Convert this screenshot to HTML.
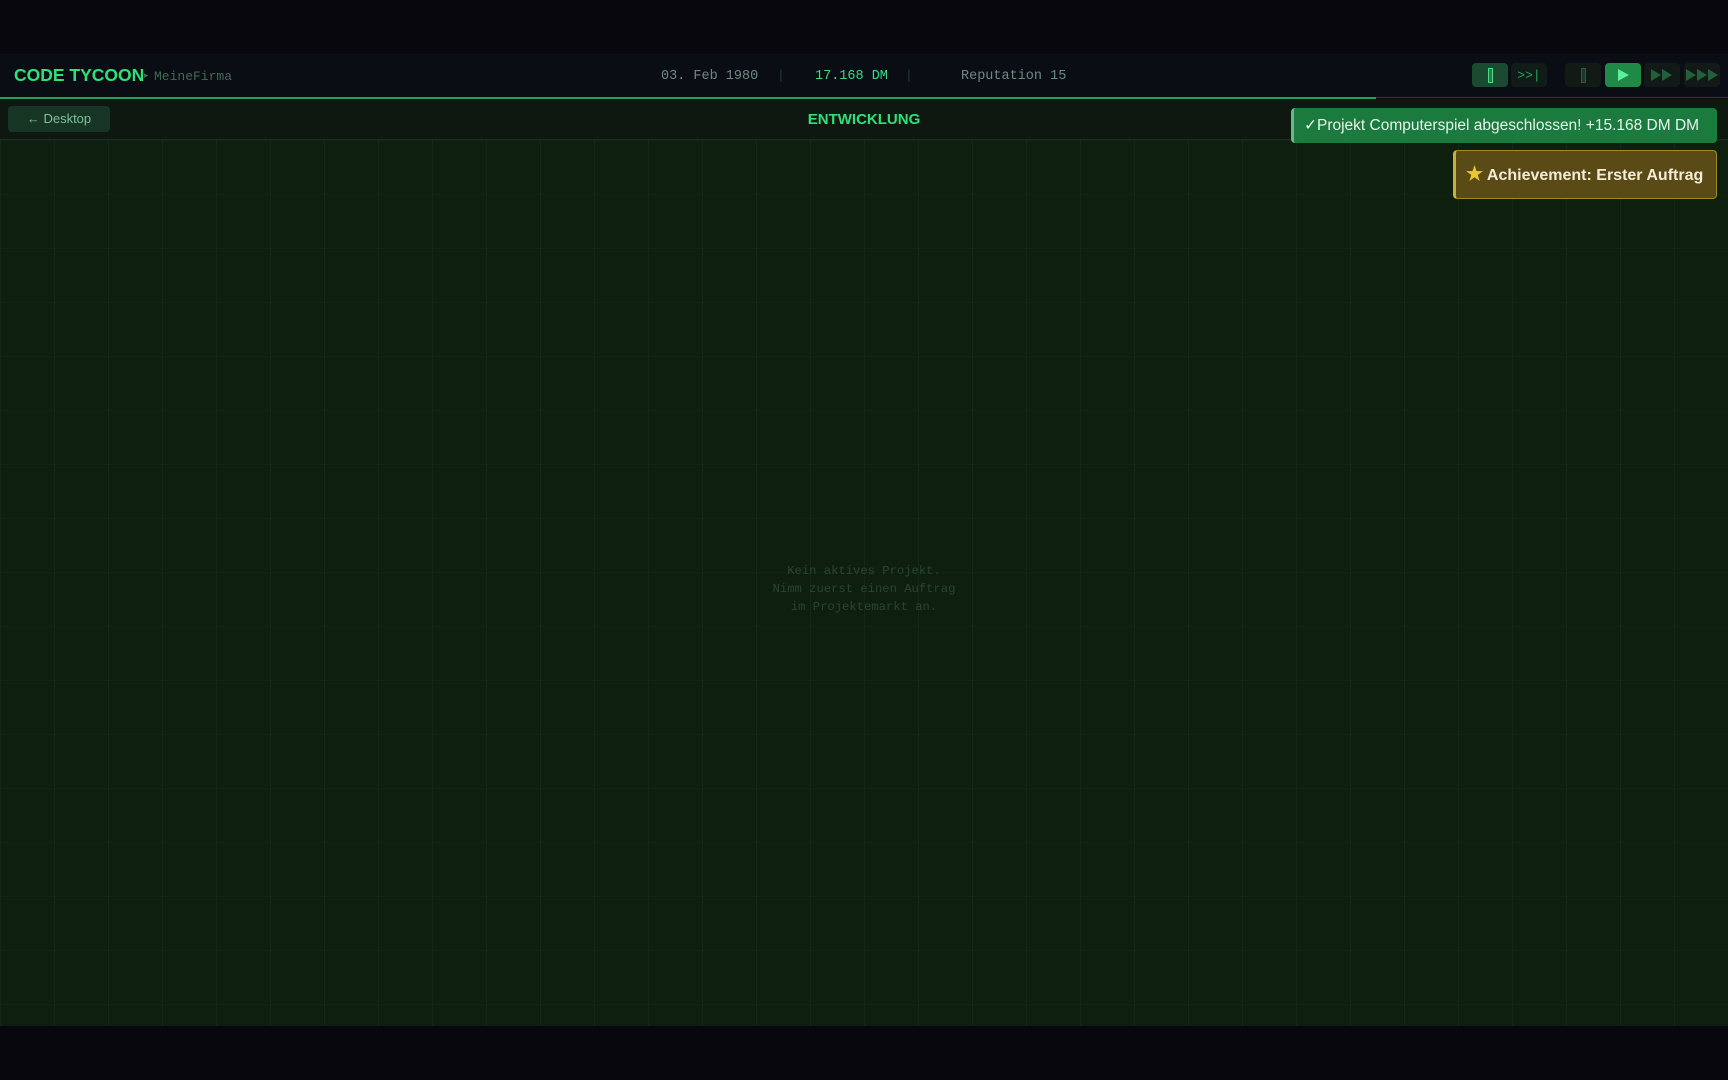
<!DOCTYPE html>
<html><head><meta charset="utf-8"><style>
*{margin:0;padding:0;box-sizing:border-box}
body{width:1728px;height:1080px;background:#07070d;position:relative;overflow:hidden;font-family:"Liberation Sans",sans-serif}
.hdr{position:absolute;left:0;top:54px;width:1728px;height:43px;background:#0a0d14}
.gl{position:absolute;left:0;top:97px;width:1376px;height:2px;background:#22a050}
.gl2{position:absolute;left:1376px;top:97px;width:352px;height:1px;background:#174a2a}
.sub{position:absolute;left:0;top:99px;width:1728px;height:41px;background:#0f1711;border-bottom:1px solid #1a2e1e}
.main{position:absolute;left:0;top:140px;width:1728px;height:886px;background-color:#0e1f10;
background-image:linear-gradient(to right,rgba(40,70,40,.22) 1px,transparent 1px),linear-gradient(to bottom,rgba(40,70,40,.12) 1px,transparent 1px);background-size:54px 54px;background-position:0 0}
.mono{font-family:"Liberation Mono",monospace}
.t{position:absolute;white-space:nowrap}
.btn{position:absolute;top:63px;height:24px;width:36px;border-radius:4px;display:flex;align-items:center;justify-content:center}
</style></head><body>
<div class="hdr"></div>
<div class="t" style="left:14px;top:65px;font-size:17.5px;font-weight:bold;color:#2ee07a">CODE TYCOON</div>
<div class="t" style="left:144px;top:70px;font-size:9px;color:#3f6a55">▸</div>
<div class="t mono" style="left:154px;top:69px;font-size:13px;color:#3f6a55">MeineFirma</div>
<div class="t mono" style="left:661px;top:69px;font-size:13.5px;color:#6e8a80">03. Feb 1980</div>
<div class="t mono" style="left:777px;top:68px;font-size:13px;color:#2a3b33">|</div>
<div class="t mono" style="left:815px;top:69px;font-size:13.5px;color:#3ad88a">17.168 DM</div>
<div class="t mono" style="left:905px;top:68px;font-size:13px;color:#2a3b33">|</div>
<div class="t mono" style="left:961px;top:69px;font-size:13.5px;color:#6e8a80">Reputation 15</div>
<div class="btn" style="left:1472px;background:#1a4a30"><div style="width:5px;height:15px;border:1px solid #4cd98a;background:#2a7a4a"></div></div>
<div class="btn mono" style="left:1511px;background:#111c18;color:#2ea060;font-size:13px">&gt;&gt;|</div>
<div class="btn" style="left:1565px;background:#121a16"><div style="width:5px;height:15px;border:1px solid #2a5a3a;background:#1a3a28"></div></div>
<div class="btn" style="left:1605px;background:#1f8a48"><svg width="14" height="14"><path d="M2 1L13 7L2 13Z" fill="#5cf09a"/></svg></div>
<div class="btn" style="left:1644px;background:#111a16"><svg width="26" height="14"><path d="M2 1L12 7L2 13ZM13 1L23 7L13 13Z" fill="#22603a"/></svg></div>
<div class="btn" style="left:1684px;background:#111a16"><svg width="34" height="14"><path d="M1 1L11 7L1 13ZM12 1L22 7L12 13ZM23 1L33 7L23 13Z" fill="#22603a"/></svg></div>
<div class="gl"></div><div class="gl2"></div>
<div class="sub"></div>
<div class="t" style="left:8px;top:106px;width:102px;height:26px;background:#173524;border-radius:4px;color:#7ec09a;font-size:13px;line-height:26px;text-align:center">← Desktop</div>
<div class="t" style="left:0;width:1728px;text-align:center;top:111px;font-size:15px;font-weight:bold;color:#2ee07a">ENTWICKLUNG</div>
<div class="main"></div>
<div class="t mono" style="left:0;width:1728px;top:562px;text-align:center;font-size:12.2px;line-height:18px;color:#27472d">Kein aktives Projekt.<br>Nimm zuerst einen Auftrag<br>im Projektemarkt an.</div>
<div class="t" style="left:1291px;top:108px;width:426px;height:35px;background:#1b7a3e;border-left:3px solid #6ab88a;border-radius:4px;color:#e8f4ec;font-size:15.5px;line-height:35px;padding-left:10px">✓Projekt Computerspiel abgeschlossen! +15.168 DM DM</div>
<div class="t" style="left:1453px;top:150px;width:264px;height:49px;background:#5a4a16;border:1px solid #a08a22;border-left:3px solid #c8b030;border-radius:4px;color:#f2ecd8;font-size:16px;font-weight:bold;line-height:47px;padding-left:10px"><span style="color:#e8c830;font-size:19px">★</span> Achievement: Erster Auftrag</div>
</body></html>
